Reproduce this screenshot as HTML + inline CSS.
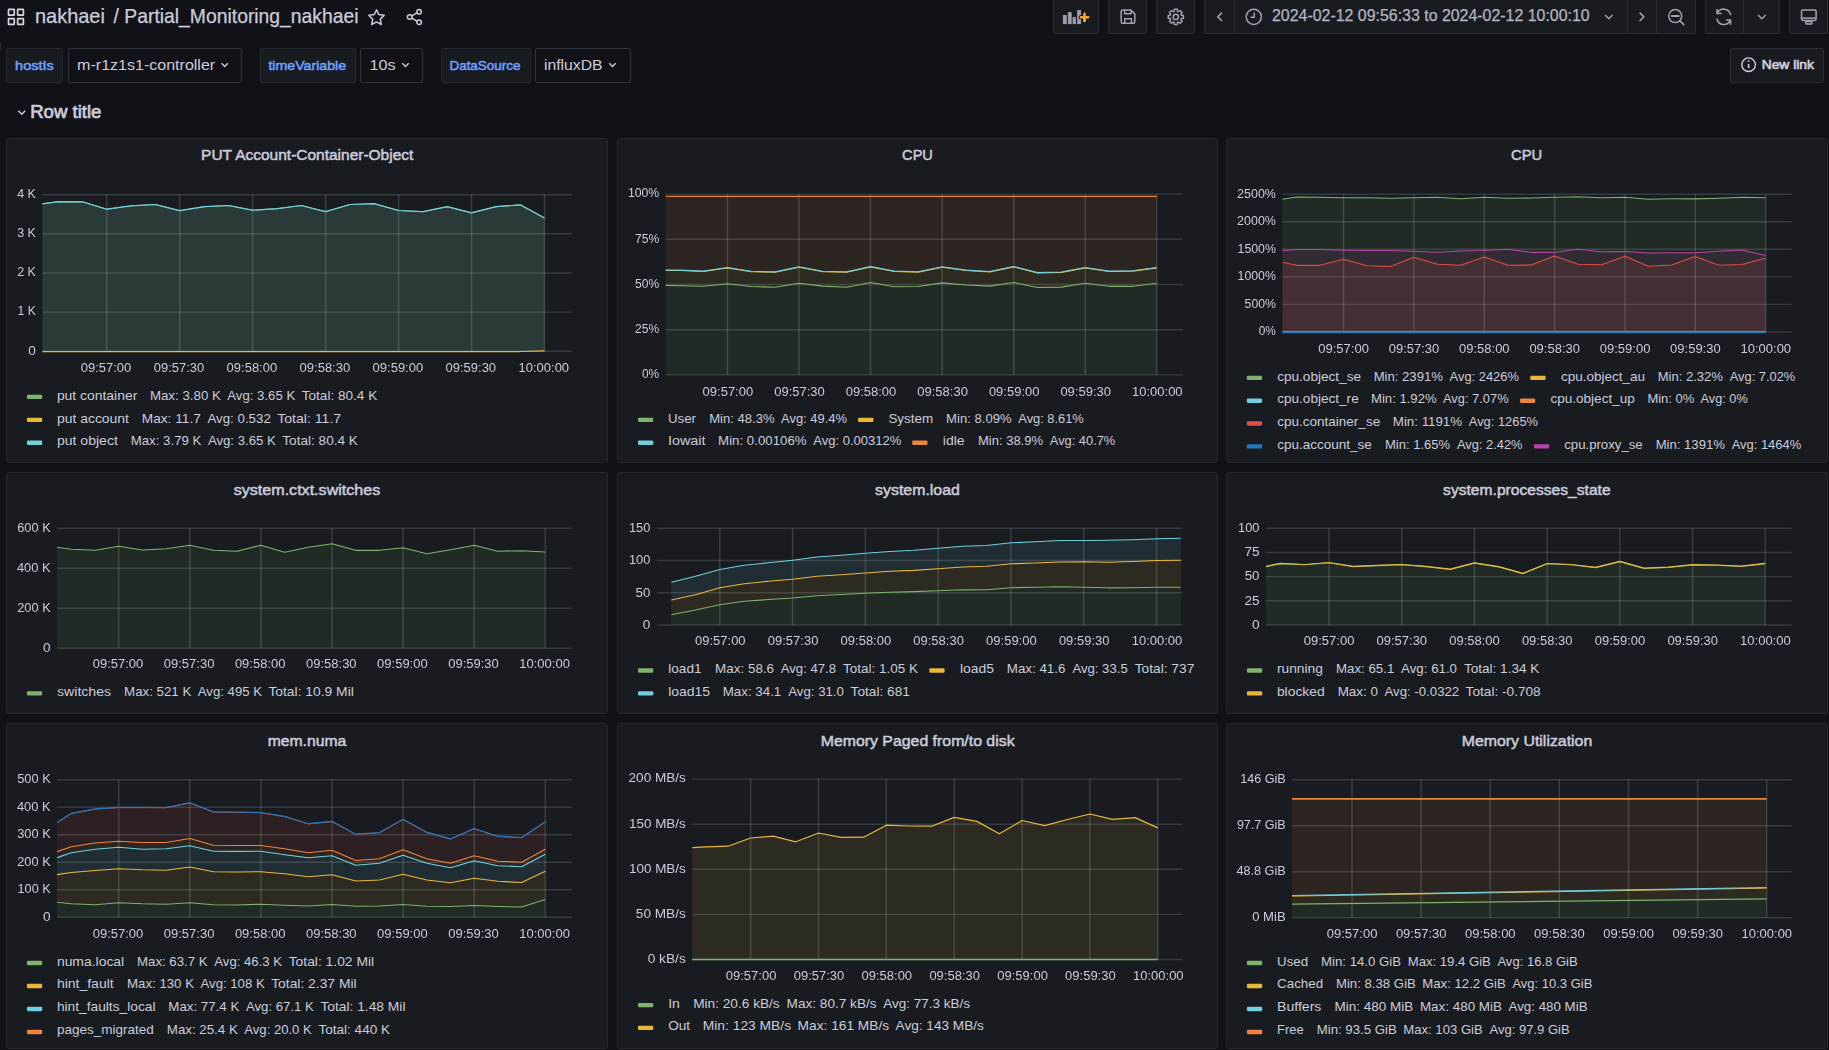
<!DOCTYPE html>
<html lang="en"><head><meta charset="utf-8"><title>Partial_Monitoring_nakhaei - Grafana</title>
<style>
html,body{margin:0;padding:0;background:#111217;}
body{width:1829px;height:1050px;overflow:hidden;position:relative;font-family:"Liberation Sans",sans-serif;color:#ccccdc;}
svg text{font-family:"Liberation Sans",sans-serif;}
.panel{position:absolute;background:#181b1f;border:1px solid #24272c;border-radius:3px;box-sizing:border-box;overflow:hidden;}
.panel svg{position:absolute;left:-1px;top:-1px;}
.btn{position:absolute;box-sizing:border-box;background:#181b1f;border:1px solid #2a2d33;border-radius:2px;}
.lbl{position:absolute;box-sizing:border-box;background:#181b1f;border:1px solid #25282e;border-radius:2px;top:48px;height:35px;}
.val{position:absolute;box-sizing:border-box;background:#111217;border:1px solid #31343b;border-radius:2px;top:48px;height:35px;}
#top{position:absolute;left:0;top:0;}
</style></head><body>
<div id="nav">
<div class="btn" style="left:1053.1px;top:-2.0px;width:45.5px;height:36.0px;"></div>
<div class="btn" style="left:1108.3px;top:-2.0px;width:38.5px;height:36.0px;"></div>
<div class="btn" style="left:1156.4px;top:-2.0px;width:38.5px;height:36.0px;"></div>
<div class="btn" style="left:1204.2px;top:-2.0px;width:492.1px;height:36.0px;"></div>
<div class="btn" style="left:1705.4px;top:-2.0px;width:74.4px;height:36.0px;"></div>
<div class="btn" style="left:1789.4px;top:-2.0px;width:38.2px;height:36.0px;"></div>
<div class="btn" style="left:1730.4px;top:48.4px;width:93.4px;height:34.4px;"></div>
</div>
<div id="vars">
<div class="lbl" style="left:6.2px;width:56.5px"></div>
<div class="lbl" style="left:260px;width:95.5px"></div>
<div class="lbl" style="left:440.5px;width:90.0px"></div>
<div class="val" style="left:68.2px;width:173.39999999999998px"></div>
<div class="val" style="left:360px;width:62.60000000000002px"></div>
<div class="val" style="left:534.5px;width:96.10000000000002px"></div>
</div>
<svg id="top" width="1829" height="136" viewBox="0 0 1829 136">
<rect x="8.5" y="9.35" width="5.75" height="5.85" rx="0.35" fill="none" stroke="#d5d5e2" stroke-width="1.7"/>
<rect x="17.65" y="9.35" width="5.75" height="5.85" rx="0.35" fill="none" stroke="#d5d5e2" stroke-width="1.7"/>
<rect x="8.5" y="18.6" width="5.75" height="5.85" rx="0.35" fill="none" stroke="#d5d5e2" stroke-width="1.7"/>
<rect x="17.65" y="18.6" width="5.75" height="5.85" rx="0.35" fill="none" stroke="#d5d5e2" stroke-width="1.7"/>
<text x="35.0" y="23.4" font-size="20.2" textLength="69.9" lengthAdjust="spacingAndGlyphs" stroke="#ccccdc" stroke-width="0.25" fill="#ccccdc">nakhaei</text>
<text x="113.6" y="23.4" font-size="20.2" textLength="245.0" lengthAdjust="spacingAndGlyphs" stroke="#ccccdc" stroke-width="0.25" fill="#ccccdc">/ Partial_Monitoring_nakhaei</text>
<path transform="translate(376.5,17.3)" d="M0 -7.6L2.3 -2.7L7.7 -2L3.8 1.8L4.8 7.2L0 4.6L-4.8 7.2L-3.8 1.8L-7.7 -2L-2.3 -2.7Z" fill="none" stroke="#ccccdc" stroke-width="1.5" stroke-linejoin="round"/>
<g transform="translate(414.5,17)" fill="none" stroke="#ccccdc" stroke-width="1.5"><circle cx="4.6" cy="-5.2" r="2.3"/><circle cx="-4.8" cy="0" r="2.3"/><circle cx="4.6" cy="5.2" r="2.3"/><path d="M-2.7 -1.1L2.5 -4.1M-2.7 1.1L2.5 4.1"/></g>
<g fill="#9d9eab"><rect x="1062.9" y="15" width="3.9" height="9.1"/><rect x="1067.9" y="12.1" width="3.8" height="12"/><rect x="1072.6" y="17.1" width="3.3" height="7"/><rect x="1077.1" y="10.1" width="3.9" height="14"/></g>
<defs><filter id="nf" x="-5%" y="-5%" width="110%" height="110%" color-interpolation-filters="sRGB"><feOffset dx="0" dy="0"/></filter></defs>
<defs><linearGradient id="pg" gradientUnits="userSpaceOnUse" x1="0" y1="12" x2="0" y2="22"><stop offset="0" stop-color="#f58b1f"/><stop offset="1" stop-color="#fbc12d"/></linearGradient></defs>
<path d="M1084.5 13.6V20.9M1080.9 17.2H1088.2" stroke="#181b1f" stroke-width="4.6" stroke-linecap="round" fill="none"/>
<path d="M1084.5 13.6V20.9M1080.9 17.25H1088.2" stroke="url(#pg)" stroke-width="2.6" stroke-linecap="round" fill="none"/>
<g transform="translate(1128,16.65)" fill="none" stroke="#a3a4b2" stroke-width="1.5" stroke-linejoin="round"><path d="M-6.8 -5.2A1.5 1.5 0 0 1 -5.3 -6.7H2.9L6.8 -2.8V5.2A1.5 1.5 0 0 1 5.3 6.7H-5.3A1.5 1.5 0 0 1 -6.8 5.2Z"/><path d="M-3.3 6.5V2.0H3.5V6.5M-3.3 -6.5V-3H3.1V-6.3"/></g>
<path d="M1174.09 11.36L1174.35 9.34L1177.25 9.34L1177.51 11.36L1178.51 11.77L1180.12 10.52L1182.18 12.58L1180.93 14.19L1181.34 15.19L1183.36 15.45L1183.36 18.35L1181.34 18.61L1180.93 19.61L1182.18 21.22L1180.12 23.28L1178.51 22.03L1177.51 22.44L1177.25 24.46L1174.35 24.46L1174.09 22.44L1173.09 22.03L1171.48 23.28L1169.42 21.22L1170.67 19.61L1170.26 18.61L1168.24 18.35L1168.24 15.45L1170.26 15.19L1170.67 14.19L1169.42 12.58L1171.48 10.52L1173.09 11.77Z" fill="none" stroke="#a3a4b2" stroke-width="1.5" stroke-linejoin="round"/><circle cx="1175.8" cy="16.9" r="2.6" fill="none" stroke="#a3a4b2" stroke-width="1.5"/>
<path d="M1234.4 -2V33.5M1627.6 -2V33.5M1656.5 -2V33.5M1743.5 -2V33.5" stroke="#2a2d33" stroke-width="1"/>
<path d="M1222 12.6L1217.8 16.8L1222 21" fill="none" stroke="#a3a4b2" stroke-width="1.6"/>
<circle cx="1253.8" cy="16.8" r="7.6" fill="none" stroke="#a3a4b2" stroke-width="1.5"/><path d="M1254.2 12.4V17.2H1250.6" fill="none" stroke="#a3a4b2" stroke-width="1.5"/>
<text x="1272.0" y="21.2" font-size="16.2" textLength="317.7" lengthAdjust="spacingAndGlyphs" stroke="#b4b5c5" stroke-width="0.25" fill="#b4b5c5">2024-02-12 09:56:33 to 2024-02-12 10:00:10</text>
<path d="M1605 15L1608.8 18.8L1612.6 15" fill="none" stroke="#a3a4b2" stroke-width="1.5"/>
<path d="M1639.6 12.6L1643.8 16.8L1639.6 21" fill="none" stroke="#a3a4b2" stroke-width="1.6"/>
<circle cx="1675.2" cy="16.1" r="6.5" fill="none" stroke="#a3a4b2" stroke-width="1.5"/><path d="M1680 20.9L1683.8 24.6" fill="none" stroke="#a3a4b2" stroke-width="1.6" stroke-linecap="round"/><path d="M1671.7 16.1H1678.7" fill="none" stroke="#a3a4b2" stroke-width="2" stroke-linecap="round"/>
<g fill="none" stroke="#a3a4b2" stroke-width="1.5" stroke-linecap="round" stroke-linejoin="round"><path d="M1730.6 14.6A7 7 0 0 0 1717.4 13.2M1717.0 9.4V13.6H1721.2"/><path d="M1717.0 19.0A7 7 0 0 0 1730.2 20.4M1730.6 24.2V20H1726.4"/></g>
<path d="M1758 15L1761.8 18.8L1765.6 15" fill="none" stroke="#a3a4b2" stroke-width="1.5"/>
<g fill="none" stroke="#a3a4b2" stroke-width="1.5" stroke-linejoin="round"><rect x="1801.5" y="9.9" width="14.6" height="10.6" rx="1.4"/><path d="M1801.5 18.1H1816.1"/><rect x="1805.9" y="21.4" width="5.8" height="2.7" rx="0.6"/></g>
<circle cx="1748.6" cy="64.7" r="6.8" fill="none" stroke="#ccccdc" stroke-width="1.4"/><path d="M1748.6 63.9V68.1" stroke="#ccccdc" stroke-width="1.6" fill="none"/><circle cx="1748.6" cy="61.1" r="0.95" fill="#ccccdc"/>
<text x="1761.7" y="69.4" font-size="13.2" textLength="52.2" lengthAdjust="spacingAndGlyphs" stroke="#ccccdc" stroke-width="0.7" fill="#ccccdc">New link</text>
<text x="15.1" y="70.0" font-size="13.2" textLength="38.6" lengthAdjust="spacingAndGlyphs" stroke="#6e9fff" stroke-width="0.55" fill="#6e9fff">hostIs</text>
<text x="268.4" y="70.0" font-size="13.2" textLength="77.7" lengthAdjust="spacingAndGlyphs" stroke="#6e9fff" stroke-width="0.55" fill="#6e9fff">timeVariable</text>
<text x="449.4" y="70.0" font-size="13.2" textLength="71.2" lengthAdjust="spacingAndGlyphs" stroke="#6e9fff" stroke-width="0.55" fill="#6e9fff">DataSource</text>
<text x="77.1" y="70.4" font-size="15.4" textLength="138.1" lengthAdjust="spacingAndGlyphs" fill="#ccccdc">m-r1z1s1-controller</text>
<text x="369.4" y="70.4" font-size="15.4" textLength="26.2" lengthAdjust="spacingAndGlyphs" fill="#ccccdc">10s</text>
<text x="543.9" y="70.4" font-size="15.4" textLength="58.7" lengthAdjust="spacingAndGlyphs" fill="#ccccdc">influxDB</text>
<path d="M221.5 63.3L224.7 66.5L227.89999999999998 63.3" fill="none" stroke="#ccccdc" stroke-width="1.4"/>
<path d="M402.3 63.3L405.5 66.5L408.7 63.3" fill="none" stroke="#ccccdc" stroke-width="1.4"/>
<path d="M609.3 63.3L612.5 66.5L615.7 63.3" fill="none" stroke="#ccccdc" stroke-width="1.4"/>
<path d="M18.4 110.8L21.8 114.2L25.2 110.8" fill="none" stroke="#ccccdc" stroke-width="1.4"/>
<text x="30.2" y="117.8" font-size="17.6" textLength="71.2" lengthAdjust="spacingAndGlyphs" stroke="#ccccdc" stroke-width="0.7" fill="#ccccdc">Row title</text>
<rect x="0" y="42" width="1" height="9" fill="#2a2d33"/>
</svg>
<div class="panel" style="left:6px;top:138px;width:602px;height:325px">
<svg width="602" height="325" viewBox="6 138 602 325">
<text x="201.1" y="159.9" font-size="15.4" textLength="212.2" lengthAdjust="spacingAndGlyphs" stroke="#ccccdc" stroke-width="0.5" fill="#ccccdc">PUT Account-Container-Object</text>
<clipPath id="c1"><rect x="42.2" y="191.7" width="529.5" height="161.60000000000002"/></clipPath>
<g clip-path="url(#c1)">
<polygon points="42.2,203.8 58.1,201.7 82.4,201.8 106.7,209.2 131.0,205.8 155.3,204.5 179.7,210.7 204.0,206.7 228.3,205.5 252.6,210.2 277.0,208.7 301.3,205.5 325.6,211.7 349.9,204.5 374.2,203.7 398.6,210.5 422.9,211.7 447.2,206.7 471.5,212.8 495.9,206.7 520.2,204.8 544.5,218.0 544.5,351.3 42.2,351.3" fill="#7EB26D" fill-opacity="0.1"/>
<polygon points="42.2,203.8 58.1,201.7 82.4,201.8 106.7,209.2 131.0,205.8 155.3,204.5 179.7,210.7 204.0,206.7 228.3,205.5 252.6,210.2 277.0,208.7 301.3,205.5 325.6,211.7 349.9,204.5 374.2,203.7 398.6,210.5 422.9,211.7 447.2,206.7 471.5,212.8 495.9,206.7 520.2,204.8 544.5,218.0 544.5,351.3 42.2,351.3" fill="#6ED0E0" fill-opacity="0.1"/>
</g>
<path d="M106.7 194.7V351.3M179.7 194.7V351.3M252.6 194.7V351.3M325.6 194.7V351.3M398.6 194.7V351.3M471.5 194.7V351.3M544.5 194.7V351.3" stroke="rgba(201,206,203,0.205)" stroke-width="1.4" fill="none"/><path d="M42.2 194.7H571.7M42.2 233.8H571.7M42.2 273.0H571.7M42.2 312.1H571.7M42.2 351.3H571.7" stroke="rgba(201,206,203,0.175)" stroke-width="1.4" fill="none"/>
<g clip-path="url(#c1)">
<polyline points="42.2,203.8 58.1,201.7 82.4,201.8 106.7,209.2 131.0,205.8 155.3,204.5 179.7,210.7 204.0,206.7 228.3,205.5 252.6,210.2 277.0,208.7 301.3,205.5 325.6,211.7 349.9,204.5 374.2,203.7 398.6,210.5 422.9,211.7 447.2,206.7 471.5,212.8 495.9,206.7 520.2,204.8 544.5,218.0" fill="none" stroke="#7EB26D" stroke-width="1.15" stroke-linejoin="round"/>
<polyline points="42.2,351.5 520.2,351.5 544.5,350.9" fill="none" stroke="#EAB839" stroke-width="1.25" stroke-linejoin="round"/>
<polyline points="42.2,203.8 58.1,201.7 82.4,201.8 106.7,209.2 131.0,205.8 155.3,204.5 179.7,210.7 204.0,206.7 228.3,205.5 252.6,210.2 277.0,208.7 301.3,205.5 325.6,211.7 349.9,204.5 374.2,203.7 398.6,210.5 422.9,211.7 447.2,206.7 471.5,212.8 495.9,206.7 520.2,204.8 544.5,218.0" fill="none" stroke="#6ED0E0" stroke-width="1.2" stroke-linejoin="round"/>
</g>
<g filter="url(#nf)"><text x="106.0" y="371.9" font-size="13.2" text-anchor="middle" textLength="50.6" lengthAdjust="spacingAndGlyphs" fill="#ccccdc">09:57:00</text><text x="179.0" y="371.9" font-size="13.2" text-anchor="middle" textLength="50.6" lengthAdjust="spacingAndGlyphs" fill="#ccccdc">09:57:30</text><text x="251.9" y="371.9" font-size="13.2" text-anchor="middle" textLength="50.6" lengthAdjust="spacingAndGlyphs" fill="#ccccdc">09:58:00</text><text x="324.9" y="371.9" font-size="13.2" text-anchor="middle" textLength="50.6" lengthAdjust="spacingAndGlyphs" fill="#ccccdc">09:58:30</text><text x="397.9" y="371.9" font-size="13.2" text-anchor="middle" textLength="50.6" lengthAdjust="spacingAndGlyphs" fill="#ccccdc">09:59:00</text><text x="470.8" y="371.9" font-size="13.2" text-anchor="middle" textLength="50.6" lengthAdjust="spacingAndGlyphs" fill="#ccccdc">09:59:30</text><text x="543.8" y="371.9" font-size="13.2" text-anchor="middle" textLength="50.6" lengthAdjust="spacingAndGlyphs" fill="#ccccdc">10:00:00</text><text x="35.9" y="198.0" font-size="13.2" text-anchor="end" textLength="18.7" lengthAdjust="spacingAndGlyphs" fill="#ccccdc">4 K</text><text x="35.9" y="237.2" font-size="13.2" text-anchor="end" textLength="18.7" lengthAdjust="spacingAndGlyphs" fill="#ccccdc">3 K</text><text x="35.9" y="276.3" font-size="13.2" text-anchor="end" textLength="18.7" lengthAdjust="spacingAndGlyphs" fill="#ccccdc">2 K</text><text x="35.9" y="315.4" font-size="13.2" text-anchor="end" textLength="18.3" lengthAdjust="spacingAndGlyphs" fill="#ccccdc">1 K</text><text x="35.9" y="354.6" font-size="13.2" text-anchor="end" textLength="7.6" lengthAdjust="spacingAndGlyphs" fill="#ccccdc">0</text></g>
<rect x="26.9" y="394.70" width="15.3" height="4.4" rx="1.1" fill="#7EB26D"/>
<text x="56.9" y="399.9" font-size="13.2" textLength="80.4" lengthAdjust="spacingAndGlyphs" fill="#ccccdc">put container</text>
<text x="149.9" y="399.9" font-size="13.2" textLength="71.0" lengthAdjust="spacingAndGlyphs" fill="#ccccdc">Max: 3.80 K</text>
<text x="227.3" y="399.9" font-size="13.2" textLength="67.9" lengthAdjust="spacingAndGlyphs" fill="#ccccdc">Avg: 3.65 K</text>
<text x="301.7" y="399.9" font-size="13.2" textLength="75.6" lengthAdjust="spacingAndGlyphs" fill="#ccccdc">Total: 80.4 K</text>
<rect x="26.9" y="417.70" width="15.3" height="4.4" rx="1.1" fill="#EAB839"/>
<text x="56.9" y="422.9" font-size="13.2" textLength="72.1" lengthAdjust="spacingAndGlyphs" fill="#ccccdc">put account</text>
<text x="141.8" y="422.9" font-size="13.2" textLength="59.0" lengthAdjust="spacingAndGlyphs" fill="#ccccdc">Max: 11.7</text>
<text x="207.4" y="422.9" font-size="13.2" textLength="63.4" lengthAdjust="spacingAndGlyphs" fill="#ccccdc">Avg: 0.532</text>
<text x="277.2" y="422.9" font-size="13.2" textLength="64.0" lengthAdjust="spacingAndGlyphs" fill="#ccccdc">Total: 11.7</text>
<rect x="26.9" y="440.60" width="15.3" height="4.4" rx="1.1" fill="#6ED0E0"/>
<text x="56.9" y="445.2" font-size="13.2" textLength="61.0" lengthAdjust="spacingAndGlyphs" fill="#ccccdc">put object</text>
<text x="130.7" y="445.2" font-size="13.2" textLength="70.7" lengthAdjust="spacingAndGlyphs" fill="#ccccdc">Max: 3.79 K</text>
<text x="207.9" y="445.2" font-size="13.2" textLength="67.9" lengthAdjust="spacingAndGlyphs" fill="#ccccdc">Avg: 3.65 K</text>
<text x="282.3" y="445.2" font-size="13.2" textLength="75.6" lengthAdjust="spacingAndGlyphs" fill="#ccccdc">Total: 80.4 K</text>
</svg></div>
<div class="panel" style="left:617px;top:138px;width:601px;height:325px">
<svg width="601" height="325" viewBox="617 138 601 325">
<text x="902.1" y="159.9" font-size="15.4" textLength="30.8" lengthAdjust="spacingAndGlyphs" stroke="#ccccdc" stroke-width="0.5" fill="#ccccdc">CPU</text>
<clipPath id="c2"><rect x="665.5" y="191.1" width="517.4000000000001" height="185.79999999999998"/></clipPath>
<g clip-path="url(#c2)">
<polygon points="665.5,285.4 679.7,285.8 703.5,286.3 727.4,283.7 751.3,286.5 775.1,287.3 799.0,283.3 822.8,286.1 846.7,287.3 870.5,282.5 894.4,286.7 918.2,286.5 942.1,282.9 966.0,285.0 989.8,286.1 1013.7,282.5 1037.5,287.5 1061.4,287.1 1085.2,283.3 1109.1,286.3 1132.9,286.3 1156.8,283.3 1156.8,374.9 665.5,374.9" fill="#7EB26D" fill-opacity="0.1"/>
<polygon points="665.5,270.1 679.7,270.1 703.5,271.1 727.4,267.5 751.3,271.3 775.1,271.9 799.0,266.9 822.8,271.3 846.7,271.9 870.5,266.5 894.4,271.1 918.2,271.7 942.1,266.9 966.0,270.1 989.8,271.5 1013.7,266.5 1037.5,272.6 1061.4,272.0 1085.2,267.5 1109.1,271.1 1132.9,270.7 1156.8,267.5 1156.8,283.3 1132.9,286.3 1109.1,286.3 1085.2,283.3 1061.4,287.1 1037.5,287.5 1013.7,282.5 989.8,286.1 966.0,285.0 942.1,282.9 918.2,286.5 894.4,286.7 870.5,282.5 846.7,287.3 822.8,286.1 799.0,283.3 775.1,287.3 751.3,286.5 727.4,283.7 703.5,286.3 679.7,285.8 665.5,285.4" fill="#EAB839" fill-opacity="0.1"/>
<polygon points="665.5,196.4 679.7,196.4 703.5,196.4 727.4,196.4 751.3,196.4 775.1,196.4 799.0,196.4 822.8,196.4 846.7,196.4 870.5,196.4 894.4,196.4 918.2,196.4 942.1,196.4 966.0,196.4 989.8,196.4 1013.7,196.4 1037.5,196.4 1061.4,196.4 1085.2,196.4 1109.1,196.4 1132.9,196.4 1156.8,196.4 1156.8,267.5 1132.9,270.7 1109.1,271.1 1085.2,267.5 1061.4,272.0 1037.5,272.6 1013.7,266.5 989.8,271.5 966.0,270.1 942.1,266.9 918.2,271.7 894.4,271.1 870.5,266.5 846.7,271.9 822.8,271.3 799.0,266.9 775.1,271.9 751.3,271.3 727.4,267.5 703.5,271.1 679.7,270.1 665.5,270.1" fill="#EF843C" fill-opacity="0.1"/>
</g>
<path d="M727.4 194.1V374.9M799.0 194.1V374.9M870.5 194.1V374.9M942.1 194.1V374.9M1013.7 194.1V374.9M1085.2 194.1V374.9M1156.8 194.1V374.9" stroke="rgba(201,206,203,0.205)" stroke-width="1.4" fill="none"/><path d="M665.5 194.1H1182.9M665.5 239.3H1182.9M665.5 284.5H1182.9M665.5 329.7H1182.9M665.5 374.9H1182.9" stroke="rgba(201,206,203,0.175)" stroke-width="1.4" fill="none"/>
<g clip-path="url(#c2)">
<polyline points="665.5,285.4 679.7,285.8 703.5,286.3 727.4,283.7 751.3,286.5 775.1,287.3 799.0,283.3 822.8,286.1 846.7,287.3 870.5,282.5 894.4,286.7 918.2,286.5 942.1,282.9 966.0,285.0 989.8,286.1 1013.7,282.5 1037.5,287.5 1061.4,287.1 1085.2,283.3 1109.1,286.3 1132.9,286.3 1156.8,283.3" fill="none" stroke="#7EB26D" stroke-width="1.15" stroke-linejoin="round"/>
<polyline points="665.5,270.5 679.7,270.5 703.5,271.5 727.4,267.9 751.3,271.7 775.1,272.3 799.0,267.3 822.8,271.7 846.7,272.3 870.5,266.9 894.4,271.5 918.2,272.1 942.1,267.3 966.0,270.5 989.8,271.9 1013.7,266.9 1037.5,273.0 1061.4,272.4 1085.2,267.9 1109.1,271.5 1132.9,271.1 1156.8,267.9" fill="none" stroke="#EAB839" stroke-width="1.15" stroke-linejoin="round"/>
<polyline points="665.5,270.1 679.7,270.1 703.5,271.1 727.4,267.5 751.3,271.3 775.1,271.9 799.0,266.9 822.8,271.3 846.7,271.9 870.5,266.5 894.4,271.1 918.2,271.7 942.1,266.9 966.0,270.1 989.8,271.5 1013.7,266.5 1037.5,272.6 1061.4,272.0 1085.2,267.5 1109.1,271.1 1132.9,270.7 1156.8,267.5" fill="none" stroke="#6ED0E0" stroke-width="1.15" stroke-linejoin="round"/>
<polyline points="665.5,196.4 679.7,196.4 703.5,196.4 727.4,196.4 751.3,196.4 775.1,196.4 799.0,196.4 822.8,196.4 846.7,196.4 870.5,196.4 894.4,196.4 918.2,196.4 942.1,196.4 966.0,196.4 989.8,196.4 1013.7,196.4 1037.5,196.4 1061.4,196.4 1085.2,196.4 1109.1,196.4 1132.9,196.4 1156.8,196.4" fill="none" stroke="#EF843C" stroke-width="1.3" stroke-linejoin="round"/>
</g>
<g filter="url(#nf)"><text x="727.9" y="395.5" font-size="13.2" text-anchor="middle" textLength="50.6" lengthAdjust="spacingAndGlyphs" fill="#ccccdc">09:57:00</text><text x="799.5" y="395.5" font-size="13.2" text-anchor="middle" textLength="50.6" lengthAdjust="spacingAndGlyphs" fill="#ccccdc">09:57:30</text><text x="871.0" y="395.5" font-size="13.2" text-anchor="middle" textLength="50.6" lengthAdjust="spacingAndGlyphs" fill="#ccccdc">09:58:00</text><text x="942.6" y="395.5" font-size="13.2" text-anchor="middle" textLength="50.6" lengthAdjust="spacingAndGlyphs" fill="#ccccdc">09:58:30</text><text x="1014.2" y="395.5" font-size="13.2" text-anchor="middle" textLength="50.6" lengthAdjust="spacingAndGlyphs" fill="#ccccdc">09:59:00</text><text x="1085.7" y="395.5" font-size="13.2" text-anchor="middle" textLength="50.6" lengthAdjust="spacingAndGlyphs" fill="#ccccdc">09:59:30</text><text x="1157.3" y="395.5" font-size="13.2" text-anchor="middle" textLength="50.6" lengthAdjust="spacingAndGlyphs" fill="#ccccdc">10:00:00</text><text x="659.2" y="197.4" font-size="13.2" text-anchor="end" textLength="31.3" lengthAdjust="spacingAndGlyphs" fill="#ccccdc">100%</text><text x="659.2" y="242.6" font-size="13.2" text-anchor="end" textLength="24.2" lengthAdjust="spacingAndGlyphs" fill="#ccccdc">75%</text><text x="659.2" y="287.8" font-size="13.2" text-anchor="end" textLength="24.2" lengthAdjust="spacingAndGlyphs" fill="#ccccdc">50%</text><text x="659.2" y="333.0" font-size="13.2" text-anchor="end" textLength="24.2" lengthAdjust="spacingAndGlyphs" fill="#ccccdc">25%</text><text x="659.2" y="378.2" font-size="13.2" text-anchor="end" textLength="17.2" lengthAdjust="spacingAndGlyphs" fill="#ccccdc">0%</text></g>
<rect x="638.0" y="417.70" width="15.3" height="4.4" rx="1.1" fill="#7EB26D"/>
<text x="667.9" y="422.9" font-size="13.2" textLength="28.1" lengthAdjust="spacingAndGlyphs" fill="#ccccdc">User</text>
<text x="709.2" y="422.9" font-size="13.2" textLength="65.5" lengthAdjust="spacingAndGlyphs" fill="#ccccdc">Min: 48.3%</text>
<text x="781.1" y="422.9" font-size="13.2" textLength="65.8" lengthAdjust="spacingAndGlyphs" fill="#ccccdc">Avg: 49.4%</text>
<rect x="858.1" y="417.70" width="15.3" height="4.4" rx="1.1" fill="#EAB839"/>
<text x="888.4" y="422.9" font-size="13.2" textLength="44.8" lengthAdjust="spacingAndGlyphs" fill="#ccccdc">System</text>
<text x="946.1" y="422.9" font-size="13.2" textLength="65.5" lengthAdjust="spacingAndGlyphs" fill="#ccccdc">Min: 8.09%</text>
<text x="1018.3" y="422.9" font-size="13.2" textLength="65.5" lengthAdjust="spacingAndGlyphs" fill="#ccccdc">Avg: 8.61%</text>
<rect x="638.0" y="440.60" width="15.3" height="4.4" rx="1.1" fill="#6ED0E0"/>
<text x="667.9" y="445.2" font-size="13.2" textLength="37.6" lengthAdjust="spacingAndGlyphs" fill="#ccccdc">Iowait</text>
<text x="718.1" y="445.2" font-size="13.2" textLength="88.5" lengthAdjust="spacingAndGlyphs" fill="#ccccdc">Min: 0.00106%</text>
<text x="813.2" y="445.2" font-size="13.2" textLength="88.2" lengthAdjust="spacingAndGlyphs" fill="#ccccdc">Avg: 0.00312%</text>
<rect x="912.2" y="440.60" width="15.3" height="4.4" rx="1.1" fill="#EF843C"/>
<text x="942.8" y="445.2" font-size="13.2" textLength="21.9" lengthAdjust="spacingAndGlyphs" fill="#ccccdc">idle</text>
<text x="977.9" y="445.2" font-size="13.2" textLength="65.2" lengthAdjust="spacingAndGlyphs" fill="#ccccdc">Min: 38.9%</text>
<text x="1049.8" y="445.2" font-size="13.2" textLength="65.5" lengthAdjust="spacingAndGlyphs" fill="#ccccdc">Avg: 40.7%</text>
</svg></div>
<div class="panel" style="left:1226px;top:138px;width:602px;height:325px">
<svg width="602" height="325" viewBox="1226 138 602 325">
<text x="1511.1" y="159.9" font-size="15.4" textLength="31.2" lengthAdjust="spacingAndGlyphs" stroke="#ccccdc" stroke-width="0.5" fill="#ccccdc">CPU</text>
<clipPath id="c3"><rect x="1282.2" y="191.2" width="509.5" height="142.8"/></clipPath>
<g clip-path="url(#c3)">
<polygon points="1282.2,199.2 1296.6,197.0 1320.0,197.2 1343.5,197.7 1367.0,197.7 1390.4,198.3 1413.9,197.7 1437.3,197.3 1460.8,198.8 1484.2,197.2 1507.7,198.2 1531.1,198.0 1554.6,197.3 1578.1,196.8 1601.5,197.7 1625.0,197.2 1648.4,199.3 1671.9,198.8 1695.3,198.8 1718.8,198.3 1742.2,197.3 1765.7,197.8 1765.7,332.0 1282.2,332.0" fill="#7EB26D" fill-opacity="0.1"/>
<polygon points="1282.2,250.8 1296.6,249.5 1320.0,249.5 1343.5,250.3 1367.0,250.5 1390.4,250.5 1413.9,251.2 1437.3,252.3 1460.8,251.0 1484.2,250.5 1507.7,249.3 1531.1,252.3 1554.6,252.3 1578.1,249.3 1601.5,251.7 1625.0,251.5 1648.4,253.0 1671.9,252.7 1695.3,252.7 1718.8,251.3 1742.2,250.0 1765.7,255.5 1765.7,332.0 1282.2,332.0" fill="#BA43A9" fill-opacity="0.1"/>
<polygon points="1282.2,262.3 1296.6,265.3 1320.0,265.3 1343.5,259.3 1367.0,265.7 1390.4,266.5 1413.9,257.2 1437.3,264.3 1460.8,265.3 1484.2,257.0 1507.7,265.3 1531.1,265.0 1554.6,256.0 1578.1,264.2 1601.5,264.8 1625.0,256.2 1648.4,266.3 1671.9,265.0 1695.3,256.5 1718.8,265.2 1742.2,264.5 1765.7,258.0 1765.7,332.0 1282.2,332.0" fill="#E24D42" fill-opacity="0.1"/>
</g>
<path d="M1343.5 194.2V332.0M1413.9 194.2V332.0M1484.2 194.2V332.0M1554.6 194.2V332.0M1625.0 194.2V332.0M1695.3 194.2V332.0M1765.7 194.2V332.0" stroke="rgba(201,206,203,0.205)" stroke-width="1.4" fill="none"/><path d="M1282.2 194.2H1791.7M1282.2 221.8H1791.7M1282.2 249.3H1791.7M1282.2 276.9H1791.7M1282.2 304.4H1791.7M1282.2 332.0H1791.7" stroke="rgba(201,206,203,0.175)" stroke-width="1.4" fill="none"/>
<g clip-path="url(#c3)">
<polyline points="1282.2,199.2 1296.6,197.0 1320.0,197.2 1343.5,197.7 1367.0,197.7 1390.4,198.3 1413.9,197.7 1437.3,197.3 1460.8,198.8 1484.2,197.2 1507.7,198.2 1531.1,198.0 1554.6,197.3 1578.1,196.8 1601.5,197.7 1625.0,197.2 1648.4,199.3 1671.9,198.8 1695.3,198.8 1718.8,198.3 1742.2,197.3 1765.7,197.8" fill="none" stroke="#7EB26D" stroke-width="1.15" stroke-linejoin="round"/>
<polyline points="1282.2,331.4 1296.6,331.4 1320.0,331.4 1343.5,331.4 1367.0,331.4 1390.4,331.4 1413.9,331.4 1437.3,331.4 1460.8,331.4 1484.2,331.4 1507.7,331.4 1531.1,331.4 1554.6,331.4 1578.1,331.4 1601.5,331.4 1625.0,331.4 1648.4,331.4 1671.9,331.4 1695.3,331.4 1718.8,331.4 1742.2,331.4 1765.7,331.4" fill="none" stroke="#EF843C" stroke-width="1.0" stroke-linejoin="round"/>
<polyline points="1282.2,262.3 1296.6,265.3 1320.0,265.3 1343.5,259.3 1367.0,265.7 1390.4,266.5 1413.9,257.2 1437.3,264.3 1460.8,265.3 1484.2,257.0 1507.7,265.3 1531.1,265.0 1554.6,256.0 1578.1,264.2 1601.5,264.8 1625.0,256.2 1648.4,266.3 1671.9,265.0 1695.3,256.5 1718.8,265.2 1742.2,264.5 1765.7,258.0" fill="none" stroke="#E24D42" stroke-width="1.15" stroke-linejoin="round"/>
<polyline points="1282.2,332.4 1296.6,332.4 1320.0,332.4 1343.5,332.4 1367.0,332.4 1390.4,332.4 1413.9,332.4 1437.3,332.4 1460.8,332.4 1484.2,332.4 1507.7,332.4 1531.1,332.4 1554.6,332.4 1578.1,332.4 1601.5,332.4 1625.0,332.4 1648.4,332.4 1671.9,332.4 1695.3,332.4 1718.8,332.4 1742.2,332.4 1765.7,332.4" fill="none" stroke="#1F78C1" stroke-width="1.6" stroke-linejoin="round"/>
<polyline points="1282.2,250.8 1296.6,249.5 1320.0,249.5 1343.5,250.3 1367.0,250.5 1390.4,250.5 1413.9,251.2 1437.3,252.3 1460.8,251.0 1484.2,250.5 1507.7,249.3 1531.1,252.3 1554.6,252.3 1578.1,249.3 1601.5,251.7 1625.0,251.5 1648.4,253.0 1671.9,252.7 1695.3,252.7 1718.8,251.3 1742.2,250.0 1765.7,255.5" fill="none" stroke="#BA43A9" stroke-width="1.15" stroke-linejoin="round"/>
</g>
<g filter="url(#nf)"><text x="1343.6" y="352.6" font-size="13.2" text-anchor="middle" textLength="50.6" lengthAdjust="spacingAndGlyphs" fill="#ccccdc">09:57:00</text><text x="1414.0" y="352.6" font-size="13.2" text-anchor="middle" textLength="50.6" lengthAdjust="spacingAndGlyphs" fill="#ccccdc">09:57:30</text><text x="1484.3" y="352.6" font-size="13.2" text-anchor="middle" textLength="50.6" lengthAdjust="spacingAndGlyphs" fill="#ccccdc">09:58:00</text><text x="1554.7" y="352.6" font-size="13.2" text-anchor="middle" textLength="50.6" lengthAdjust="spacingAndGlyphs" fill="#ccccdc">09:58:30</text><text x="1625.1" y="352.6" font-size="13.2" text-anchor="middle" textLength="50.6" lengthAdjust="spacingAndGlyphs" fill="#ccccdc">09:59:00</text><text x="1695.4" y="352.6" font-size="13.2" text-anchor="middle" textLength="50.6" lengthAdjust="spacingAndGlyphs" fill="#ccccdc">09:59:30</text><text x="1765.8" y="352.6" font-size="13.2" text-anchor="middle" textLength="50.6" lengthAdjust="spacingAndGlyphs" fill="#ccccdc">10:00:00</text><text x="1275.9" y="197.5" font-size="13.2" text-anchor="end" textLength="38.8" lengthAdjust="spacingAndGlyphs" fill="#ccccdc">2500%</text><text x="1275.9" y="225.1" font-size="13.2" text-anchor="end" textLength="38.8" lengthAdjust="spacingAndGlyphs" fill="#ccccdc">2000%</text><text x="1275.9" y="252.6" font-size="13.2" text-anchor="end" textLength="38.3" lengthAdjust="spacingAndGlyphs" fill="#ccccdc">1500%</text><text x="1275.9" y="280.2" font-size="13.2" text-anchor="end" textLength="38.3" lengthAdjust="spacingAndGlyphs" fill="#ccccdc">1000%</text><text x="1275.9" y="307.7" font-size="13.2" text-anchor="end" textLength="31.3" lengthAdjust="spacingAndGlyphs" fill="#ccccdc">500%</text><text x="1275.9" y="335.3" font-size="13.2" text-anchor="end" textLength="17.2" lengthAdjust="spacingAndGlyphs" fill="#ccccdc">0%</text></g>
<rect x="1246.8" y="375.70" width="15.3" height="4.4" rx="1.1" fill="#7EB26D"/>
<text x="1277.2" y="380.9" font-size="13.2" textLength="83.8" lengthAdjust="spacingAndGlyphs" fill="#ccccdc">cpu.object_se</text>
<text x="1373.7" y="380.9" font-size="13.2" textLength="69.2" lengthAdjust="spacingAndGlyphs" fill="#ccccdc">Min: 2391%</text>
<text x="1449.6" y="380.9" font-size="13.2" textLength="69.3" lengthAdjust="spacingAndGlyphs" fill="#ccccdc">Avg: 2426%</text>
<rect x="1530.3" y="375.70" width="15.3" height="4.4" rx="1.1" fill="#EAB839"/>
<text x="1560.9" y="380.9" font-size="13.2" textLength="84.1" lengthAdjust="spacingAndGlyphs" fill="#ccccdc">cpu.object_au</text>
<text x="1657.7" y="380.9" font-size="13.2" textLength="65.3" lengthAdjust="spacingAndGlyphs" fill="#ccccdc">Min: 2.32%</text>
<text x="1729.7" y="380.9" font-size="13.2" textLength="65.6" lengthAdjust="spacingAndGlyphs" fill="#ccccdc">Avg: 7.02%</text>
<rect x="1246.8" y="398.50" width="15.3" height="4.4" rx="1.1" fill="#6ED0E0"/>
<text x="1277.2" y="402.9" font-size="13.2" textLength="81.5" lengthAdjust="spacingAndGlyphs" fill="#ccccdc">cpu.object_re</text>
<text x="1371.0" y="402.9" font-size="13.2" textLength="65.6" lengthAdjust="spacingAndGlyphs" fill="#ccccdc">Min: 1.92%</text>
<text x="1443.0" y="402.9" font-size="13.2" textLength="65.6" lengthAdjust="spacingAndGlyphs" fill="#ccccdc">Avg: 7.07%</text>
<rect x="1519.9" y="398.50" width="15.3" height="4.4" rx="1.1" fill="#EF843C"/>
<text x="1550.4" y="402.9" font-size="13.2" textLength="84.4" lengthAdjust="spacingAndGlyphs" fill="#ccccdc">cpu.object_up</text>
<text x="1647.4" y="402.9" font-size="13.2" textLength="46.8" lengthAdjust="spacingAndGlyphs" fill="#ccccdc">Min: 0%</text>
<text x="1700.6" y="402.9" font-size="13.2" textLength="47.1" lengthAdjust="spacingAndGlyphs" fill="#ccccdc">Avg: 0%</text>
<rect x="1246.8" y="421.30" width="15.3" height="4.4" rx="1.1" fill="#E24D42"/>
<text x="1277.2" y="425.9" font-size="13.2" textLength="103.0" lengthAdjust="spacingAndGlyphs" fill="#ccccdc">cpu.container_se</text>
<text x="1392.8" y="425.9" font-size="13.2" textLength="69.3" lengthAdjust="spacingAndGlyphs" fill="#ccccdc">Min: 1191%</text>
<text x="1468.8" y="425.9" font-size="13.2" textLength="69.2" lengthAdjust="spacingAndGlyphs" fill="#ccccdc">Avg: 1265%</text>
<rect x="1246.8" y="444.20" width="15.3" height="4.4" rx="1.1" fill="#1F78C1"/>
<text x="1277.2" y="448.9" font-size="13.2" textLength="94.7" lengthAdjust="spacingAndGlyphs" fill="#ccccdc">cpu.account_se</text>
<text x="1384.9" y="448.9" font-size="13.2" textLength="65.3" lengthAdjust="spacingAndGlyphs" fill="#ccccdc">Min: 1.65%</text>
<text x="1456.9" y="448.9" font-size="13.2" textLength="65.6" lengthAdjust="spacingAndGlyphs" fill="#ccccdc">Avg: 2.42%</text>
<rect x="1533.9" y="444.20" width="15.3" height="4.4" rx="1.1" fill="#BA43A9"/>
<text x="1564.2" y="448.9" font-size="13.2" textLength="78.5" lengthAdjust="spacingAndGlyphs" fill="#ccccdc">cpu.proxy_se</text>
<text x="1655.7" y="448.9" font-size="13.2" textLength="69.2" lengthAdjust="spacingAndGlyphs" fill="#ccccdc">Min: 1391%</text>
<text x="1731.7" y="448.9" font-size="13.2" textLength="69.5" lengthAdjust="spacingAndGlyphs" fill="#ccccdc">Avg: 1464%</text>
</svg></div>
<div class="panel" style="left:6px;top:472px;width:602px;height:242px">
<svg width="602" height="242" viewBox="6 472 602 242">
<text x="233.7" y="494.9" font-size="15.4" textLength="146.6" lengthAdjust="spacingAndGlyphs" stroke="#ccccdc" stroke-width="0.5" fill="#ccccdc">system.ctxt.switches</text>
<clipPath id="c4"><rect x="57" y="525.3" width="514.7" height="124.90000000000009"/></clipPath>
<g clip-path="url(#c4)">
<polygon points="57.0,547.2 71.3,549.2 95.0,550.2 118.7,546.2 142.4,550.0 166.1,548.8 189.8,545.3 213.5,550.3 237.2,551.2 260.9,545.2 284.6,552.2 308.3,547.2 332.0,543.7 355.7,550.3 379.4,550.3 403.1,547.8 426.8,553.8 450.5,549.7 474.2,545.3 497.9,551.2 521.6,550.7 545.3,552.0 545.3,648.2 57.0,648.2" fill="#7EB26D" fill-opacity="0.1"/>
</g>
<path d="M118.7 528.3V648.2M189.8 528.3V648.2M260.9 528.3V648.2M332.0 528.3V648.2M403.1 528.3V648.2M474.2 528.3V648.2M545.3 528.3V648.2" stroke="rgba(201,206,203,0.205)" stroke-width="1.4" fill="none"/><path d="M57.0 528.3H571.7M57.0 568.3H571.7M57.0 608.2H571.7M57.0 648.2H571.7" stroke="rgba(201,206,203,0.175)" stroke-width="1.4" fill="none"/>
<g clip-path="url(#c4)">
<polyline points="57.0,547.2 71.3,549.2 95.0,550.2 118.7,546.2 142.4,550.0 166.1,548.8 189.8,545.3 213.5,550.3 237.2,551.2 260.9,545.2 284.6,552.2 308.3,547.2 332.0,543.7 355.7,550.3 379.4,550.3 403.1,547.8 426.8,553.8 450.5,549.7 474.2,545.3 497.9,551.2 521.6,550.7 545.3,552.0" fill="none" stroke="#7EB26D" stroke-width="1.15" stroke-linejoin="round"/>
</g>
<g filter="url(#nf)"><text x="118.0" y="667.8" font-size="13.2" text-anchor="middle" textLength="50.6" lengthAdjust="spacingAndGlyphs" fill="#ccccdc">09:57:00</text><text x="189.1" y="667.8" font-size="13.2" text-anchor="middle" textLength="50.6" lengthAdjust="spacingAndGlyphs" fill="#ccccdc">09:57:30</text><text x="260.2" y="667.8" font-size="13.2" text-anchor="middle" textLength="50.6" lengthAdjust="spacingAndGlyphs" fill="#ccccdc">09:58:00</text><text x="331.3" y="667.8" font-size="13.2" text-anchor="middle" textLength="50.6" lengthAdjust="spacingAndGlyphs" fill="#ccccdc">09:58:30</text><text x="402.4" y="667.8" font-size="13.2" text-anchor="middle" textLength="50.6" lengthAdjust="spacingAndGlyphs" fill="#ccccdc">09:59:00</text><text x="473.5" y="667.8" font-size="13.2" text-anchor="middle" textLength="50.6" lengthAdjust="spacingAndGlyphs" fill="#ccccdc">09:59:30</text><text x="544.6" y="667.8" font-size="13.2" text-anchor="middle" textLength="50.6" lengthAdjust="spacingAndGlyphs" fill="#ccccdc">10:00:00</text><text x="50.7" y="532.1" font-size="13.2" text-anchor="end" textLength="33.5" lengthAdjust="spacingAndGlyphs" fill="#ccccdc">600 K</text><text x="50.7" y="572.1" font-size="13.2" text-anchor="end" textLength="33.8" lengthAdjust="spacingAndGlyphs" fill="#ccccdc">400 K</text><text x="50.7" y="612.0" font-size="13.2" text-anchor="end" textLength="33.5" lengthAdjust="spacingAndGlyphs" fill="#ccccdc">200 K</text><text x="50.7" y="652.0" font-size="13.2" text-anchor="end" textLength="7.6" lengthAdjust="spacingAndGlyphs" fill="#ccccdc">0</text></g>
<rect x="26.9" y="691.20" width="15.3" height="4.4" rx="1.1" fill="#7EB26D"/>
<text x="57.1" y="695.9" font-size="13.2" textLength="53.9" lengthAdjust="spacingAndGlyphs" fill="#ccccdc">switches</text>
<text x="124.1" y="695.9" font-size="13.2" textLength="67.2" lengthAdjust="spacingAndGlyphs" fill="#ccccdc">Max: 521 K</text>
<text x="197.8" y="695.9" font-size="13.2" textLength="64.2" lengthAdjust="spacingAndGlyphs" fill="#ccccdc">Avg: 495 K</text>
<text x="268.4" y="695.9" font-size="13.2" textLength="85.4" lengthAdjust="spacingAndGlyphs" fill="#ccccdc">Total: 10.9 Mil</text>
</svg></div>
<div class="panel" style="left:617px;top:472px;width:601px;height:242px">
<svg width="601" height="242" viewBox="617 472 601 242">
<text x="875.1" y="494.9" font-size="15.4" textLength="84.8" lengthAdjust="spacingAndGlyphs" stroke="#ccccdc" stroke-width="0.5" fill="#ccccdc">system.load</text>
<clipPath id="c5"><rect x="656.7" y="525.3" width="525.8" height="101.70000000000005"/></clipPath>
<g clip-path="url(#c5)">
<polygon points="671.3,614.7 695.5,610.0 719.8,604.7 744.1,601.3 768.3,599.5 792.6,598.0 816.8,595.7 841.1,594.5 865.4,593.3 889.6,592.3 913.9,591.6 938.1,590.8 962.4,589.8 986.7,589.7 1010.9,587.8 1035.2,587.3 1059.5,586.7 1083.7,587.3 1108.0,587.8 1132.2,587.7 1156.5,587.3 1180.8,587.2 1180.8,625.0 671.3,625.0" fill="#7EB26D" fill-opacity="0.1"/>
<polygon points="671.3,600.0 695.5,594.7 719.8,587.8 744.1,583.7 768.3,581.3 792.6,579.3 816.8,576.3 841.1,574.7 865.4,573.0 889.6,571.3 913.9,570.4 938.1,568.7 962.4,567.0 986.7,566.3 1010.9,563.8 1035.2,563.0 1059.5,562.0 1083.7,561.8 1108.0,562.2 1132.2,561.5 1156.5,560.5 1180.8,560.2 1180.8,587.2 1156.5,587.3 1132.2,587.7 1108.0,587.8 1083.7,587.3 1059.5,586.7 1035.2,587.3 1010.9,587.8 986.7,589.7 962.4,589.8 938.1,590.8 913.9,591.6 889.6,592.3 865.4,593.3 841.1,594.5 816.8,595.7 792.6,598.0 768.3,599.5 744.1,601.3 719.8,604.7 695.5,610.0 671.3,614.7" fill="#EAB839" fill-opacity="0.1"/>
<polygon points="671.3,582.3 695.5,576.3 719.8,569.5 744.1,565.3 768.3,562.8 792.6,560.3 816.8,557.0 841.1,555.2 865.4,553.3 889.6,551.5 913.9,550.3 938.1,548.3 962.4,546.3 986.7,545.5 1010.9,542.8 1035.2,541.7 1059.5,540.5 1083.7,540.5 1108.0,540.3 1132.2,539.7 1156.5,538.7 1180.8,538.2 1180.8,560.2 1156.5,560.5 1132.2,561.5 1108.0,562.2 1083.7,561.8 1059.5,562.0 1035.2,563.0 1010.9,563.8 986.7,566.3 962.4,567.0 938.1,568.7 913.9,570.4 889.6,571.3 865.4,573.0 841.1,574.7 816.8,576.3 792.6,579.3 768.3,581.3 744.1,583.7 719.8,587.8 695.5,594.7 671.3,600.0" fill="#6ED0E0" fill-opacity="0.1"/>
</g>
<path d="M719.8 528.3V625.0M792.6 528.3V625.0M865.4 528.3V625.0M938.1 528.3V625.0M1010.9 528.3V625.0M1083.7 528.3V625.0M1156.5 528.3V625.0" stroke="rgba(201,206,203,0.205)" stroke-width="1.4" fill="none"/><path d="M656.7 528.3H1182.5M656.7 560.5H1182.5M656.7 592.8H1182.5M656.7 625.0H1182.5" stroke="rgba(201,206,203,0.175)" stroke-width="1.4" fill="none"/>
<g clip-path="url(#c5)">
<polyline points="671.3,614.7 695.5,610.0 719.8,604.7 744.1,601.3 768.3,599.5 792.6,598.0 816.8,595.7 841.1,594.5 865.4,593.3 889.6,592.3 913.9,591.6 938.1,590.8 962.4,589.8 986.7,589.7 1010.9,587.8 1035.2,587.3 1059.5,586.7 1083.7,587.3 1108.0,587.8 1132.2,587.7 1156.5,587.3 1180.8,587.2" fill="none" stroke="#7EB26D" stroke-width="1.15" stroke-linejoin="round"/>
<polyline points="671.3,600.0 695.5,594.7 719.8,587.8 744.1,583.7 768.3,581.3 792.6,579.3 816.8,576.3 841.1,574.7 865.4,573.0 889.6,571.3 913.9,570.4 938.1,568.7 962.4,567.0 986.7,566.3 1010.9,563.8 1035.2,563.0 1059.5,562.0 1083.7,561.8 1108.0,562.2 1132.2,561.5 1156.5,560.5 1180.8,560.2" fill="none" stroke="#EAB839" stroke-width="1.15" stroke-linejoin="round"/>
<polyline points="671.3,582.3 695.5,576.3 719.8,569.5 744.1,565.3 768.3,562.8 792.6,560.3 816.8,557.0 841.1,555.2 865.4,553.3 889.6,551.5 913.9,550.3 938.1,548.3 962.4,546.3 986.7,545.5 1010.9,542.8 1035.2,541.7 1059.5,540.5 1083.7,540.5 1108.0,540.3 1132.2,539.7 1156.5,538.7 1180.8,538.2" fill="none" stroke="#6ED0E0" stroke-width="1.15" stroke-linejoin="round"/>
</g>
<g filter="url(#nf)"><text x="720.3" y="644.6" font-size="13.2" text-anchor="middle" textLength="50.6" lengthAdjust="spacingAndGlyphs" fill="#ccccdc">09:57:00</text><text x="793.1" y="644.6" font-size="13.2" text-anchor="middle" textLength="50.6" lengthAdjust="spacingAndGlyphs" fill="#ccccdc">09:57:30</text><text x="865.9" y="644.6" font-size="13.2" text-anchor="middle" textLength="50.6" lengthAdjust="spacingAndGlyphs" fill="#ccccdc">09:58:00</text><text x="938.6" y="644.6" font-size="13.2" text-anchor="middle" textLength="50.6" lengthAdjust="spacingAndGlyphs" fill="#ccccdc">09:58:30</text><text x="1011.4" y="644.6" font-size="13.2" text-anchor="middle" textLength="50.6" lengthAdjust="spacingAndGlyphs" fill="#ccccdc">09:59:00</text><text x="1084.2" y="644.6" font-size="13.2" text-anchor="middle" textLength="50.6" lengthAdjust="spacingAndGlyphs" fill="#ccccdc">09:59:30</text><text x="1157.0" y="644.6" font-size="13.2" text-anchor="middle" textLength="50.6" lengthAdjust="spacingAndGlyphs" fill="#ccccdc">10:00:00</text><text x="650.4" y="532.1" font-size="13.2" text-anchor="end" textLength="21.5" lengthAdjust="spacingAndGlyphs" fill="#ccccdc">150</text><text x="650.4" y="564.3" font-size="13.2" text-anchor="end" textLength="21.5" lengthAdjust="spacingAndGlyphs" fill="#ccccdc">100</text><text x="650.4" y="596.6" font-size="13.2" text-anchor="end" textLength="14.8" lengthAdjust="spacingAndGlyphs" fill="#ccccdc">50</text><text x="650.4" y="628.8" font-size="13.2" text-anchor="end" textLength="7.6" lengthAdjust="spacingAndGlyphs" fill="#ccccdc">0</text></g>
<rect x="638.0" y="668.30" width="15.3" height="4.4" rx="1.1" fill="#7EB26D"/>
<text x="668.2" y="672.9" font-size="13.2" textLength="33.4" lengthAdjust="spacingAndGlyphs" fill="#ccccdc">load1</text>
<text x="715.1" y="672.9" font-size="13.2" textLength="59.0" lengthAdjust="spacingAndGlyphs" fill="#ccccdc">Max: 58.6</text>
<text x="780.7" y="672.9" font-size="13.2" textLength="55.4" lengthAdjust="spacingAndGlyphs" fill="#ccccdc">Avg: 47.8</text>
<text x="843.1" y="672.9" font-size="13.2" textLength="75.0" lengthAdjust="spacingAndGlyphs" fill="#ccccdc">Total: 1.05 K</text>
<rect x="929.3" y="668.30" width="15.3" height="4.4" rx="1.1" fill="#EAB839"/>
<text x="959.9" y="672.9" font-size="13.2" textLength="34.0" lengthAdjust="spacingAndGlyphs" fill="#ccccdc">load5</text>
<text x="1006.8" y="672.9" font-size="13.2" textLength="58.6" lengthAdjust="spacingAndGlyphs" fill="#ccccdc">Max: 41.6</text>
<text x="1072.4" y="672.9" font-size="13.2" textLength="55.3" lengthAdjust="spacingAndGlyphs" fill="#ccccdc">Avg: 33.5</text>
<text x="1134.7" y="672.9" font-size="13.2" textLength="59.6" lengthAdjust="spacingAndGlyphs" fill="#ccccdc">Total: 737</text>
<rect x="638.0" y="691.20" width="15.3" height="4.4" rx="1.1" fill="#6ED0E0"/>
<text x="668.2" y="695.9" font-size="13.2" textLength="41.9" lengthAdjust="spacingAndGlyphs" fill="#ccccdc">load15</text>
<text x="722.7" y="695.9" font-size="13.2" textLength="58.6" lengthAdjust="spacingAndGlyphs" fill="#ccccdc">Max: 34.1</text>
<text x="788.3" y="695.9" font-size="13.2" textLength="55.6" lengthAdjust="spacingAndGlyphs" fill="#ccccdc">Avg: 31.0</text>
<text x="850.6" y="695.9" font-size="13.2" textLength="59.3" lengthAdjust="spacingAndGlyphs" fill="#ccccdc">Total: 681</text>
</svg></div>
<div class="panel" style="left:1226px;top:472px;width:602px;height:242px">
<svg width="602" height="242" viewBox="1226 472 602 242">
<text x="1443.1" y="494.9" font-size="15.4" textLength="167.5" lengthAdjust="spacingAndGlyphs" stroke="#ccccdc" stroke-width="0.5" fill="#ccccdc">system.processes_state</text>
<clipPath id="c6"><rect x="1265.8" y="525.3" width="525.9000000000001" height="101.70000000000005"/></clipPath>
<g clip-path="url(#c6)">
<polygon points="1265.8,566.3 1280.5,563.3 1304.8,564.5 1329.0,562.5 1353.2,566.3 1377.5,565.3 1401.7,564.5 1426.0,566.3 1450.2,569.2 1474.4,562.8 1498.7,566.7 1522.9,573.3 1547.2,563.5 1571.4,564.5 1595.6,567.3 1619.9,561.3 1644.1,568.2 1668.3,567.2 1692.6,564.7 1716.8,565.0 1741.1,566.2 1765.3,563.3 1765.3,625.0 1265.8,625.0" fill="#7EB26D" fill-opacity="0.1"/>
</g>
<path d="M1329.0 528.3V625.0M1401.7 528.3V625.0M1474.4 528.3V625.0M1547.2 528.3V625.0M1619.9 528.3V625.0M1692.6 528.3V625.0M1765.3 528.3V625.0" stroke="rgba(201,206,203,0.205)" stroke-width="1.4" fill="none"/><path d="M1265.8 528.3H1791.7M1265.8 552.5H1791.7M1265.8 576.6H1791.7M1265.8 600.8H1791.7M1265.8 625.0H1791.7" stroke="rgba(201,206,203,0.175)" stroke-width="1.4" fill="none"/>
<g clip-path="url(#c6)">
<polyline points="1265.8,566.6 1280.5,563.6 1304.8,564.8 1329.0,562.8 1353.2,566.6 1377.5,565.6 1401.7,564.8 1426.0,566.6 1450.2,569.5 1474.4,563.1 1498.7,567.0 1522.9,573.6 1547.2,563.8 1571.4,564.8 1595.6,567.6 1619.9,561.6 1644.1,568.5 1668.3,567.5 1692.6,565.0 1716.8,565.3 1741.1,566.5 1765.3,563.6" fill="none" stroke="#7EB26D" stroke-width="1.15" stroke-linejoin="round"/>
<polyline points="1265.8,566.3 1280.5,563.3 1304.8,564.5 1329.0,562.5 1353.2,566.3 1377.5,565.3 1401.7,564.5 1426.0,566.3 1450.2,569.2 1474.4,562.8 1498.7,566.7 1522.9,573.3 1547.2,563.5 1571.4,564.5 1595.6,567.3 1619.9,561.3 1644.1,568.2 1668.3,567.2 1692.6,564.7 1716.8,565.0 1741.1,566.2 1765.3,563.3" fill="none" stroke="#EAB839" stroke-width="1.2" stroke-linejoin="round"/>
</g>
<g filter="url(#nf)"><text x="1329.1" y="644.6" font-size="13.2" text-anchor="middle" textLength="50.6" lengthAdjust="spacingAndGlyphs" fill="#ccccdc">09:57:00</text><text x="1401.8" y="644.6" font-size="13.2" text-anchor="middle" textLength="50.6" lengthAdjust="spacingAndGlyphs" fill="#ccccdc">09:57:30</text><text x="1474.5" y="644.6" font-size="13.2" text-anchor="middle" textLength="50.6" lengthAdjust="spacingAndGlyphs" fill="#ccccdc">09:58:00</text><text x="1547.2" y="644.6" font-size="13.2" text-anchor="middle" textLength="50.6" lengthAdjust="spacingAndGlyphs" fill="#ccccdc">09:58:30</text><text x="1620.0" y="644.6" font-size="13.2" text-anchor="middle" textLength="50.6" lengthAdjust="spacingAndGlyphs" fill="#ccccdc">09:59:00</text><text x="1692.7" y="644.6" font-size="13.2" text-anchor="middle" textLength="50.6" lengthAdjust="spacingAndGlyphs" fill="#ccccdc">09:59:30</text><text x="1765.4" y="644.6" font-size="13.2" text-anchor="middle" textLength="50.6" lengthAdjust="spacingAndGlyphs" fill="#ccccdc">10:00:00</text><text x="1259.5" y="532.1" font-size="13.2" text-anchor="end" textLength="21.5" lengthAdjust="spacingAndGlyphs" fill="#ccccdc">100</text><text x="1259.5" y="556.3" font-size="13.2" text-anchor="end" textLength="15.1" lengthAdjust="spacingAndGlyphs" fill="#ccccdc">75</text><text x="1259.5" y="580.4" font-size="13.2" text-anchor="end" textLength="14.8" lengthAdjust="spacingAndGlyphs" fill="#ccccdc">50</text><text x="1259.5" y="604.6" font-size="13.2" text-anchor="end" textLength="15.0" lengthAdjust="spacingAndGlyphs" fill="#ccccdc">25</text><text x="1259.5" y="628.8" font-size="13.2" text-anchor="end" textLength="7.6" lengthAdjust="spacingAndGlyphs" fill="#ccccdc">0</text></g>
<rect x="1246.9" y="668.30" width="15.3" height="4.4" rx="1.1" fill="#7EB26D"/>
<text x="1276.9" y="672.9" font-size="13.2" textLength="46.0" lengthAdjust="spacingAndGlyphs" fill="#ccccdc">running</text>
<text x="1335.9" y="672.9" font-size="13.2" textLength="58.5" lengthAdjust="spacingAndGlyphs" fill="#ccccdc">Max: 65.1</text>
<text x="1401.1" y="672.9" font-size="13.2" textLength="55.9" lengthAdjust="spacingAndGlyphs" fill="#ccccdc">Avg: 61.0</text>
<text x="1463.9" y="672.9" font-size="13.2" textLength="75.5" lengthAdjust="spacingAndGlyphs" fill="#ccccdc">Total: 1.34 K</text>
<rect x="1246.9" y="691.20" width="15.3" height="4.4" rx="1.1" fill="#EAB839"/>
<text x="1276.9" y="695.9" font-size="13.2" textLength="47.8" lengthAdjust="spacingAndGlyphs" fill="#ccccdc">blocked</text>
<text x="1337.7" y="695.9" font-size="13.2" textLength="40.3" lengthAdjust="spacingAndGlyphs" fill="#ccccdc">Max: 0</text>
<text x="1384.5" y="695.9" font-size="13.2" textLength="74.7" lengthAdjust="spacingAndGlyphs" fill="#ccccdc">Avg: -0.0322</text>
<text x="1465.6" y="695.9" font-size="13.2" textLength="75.1" lengthAdjust="spacingAndGlyphs" fill="#ccccdc">Total: -0.708</text>
</svg></div>
<div class="panel" style="left:6px;top:723px;width:602px;height:326px">
<svg width="602" height="326" viewBox="6 723 602 326">
<text x="267.7" y="746.1" font-size="15.4" textLength="78.6" lengthAdjust="spacingAndGlyphs" stroke="#ccccdc" stroke-width="0.5" fill="#ccccdc">mem.numa</text>
<clipPath id="c7"><rect x="57" y="776.7" width="514.7" height="142.5999999999999"/></clipPath>
<g clip-path="url(#c7)">
<polygon points="57.0,902.2 71.3,903.7 95.0,904.7 118.7,902.7 142.4,903.8 166.1,904.3 189.8,902.7 213.5,904.8 237.2,905.0 260.9,904.2 284.6,905.2 308.3,906.0 332.0,904.5 355.7,906.2 379.4,906.0 403.1,904.5 426.8,906.3 450.5,906.5 474.2,905.5 497.9,906.5 521.6,907.0 545.3,899.5 545.3,917.3 57.0,917.3" fill="#7EB26D" fill-opacity="0.1"/>
<polygon points="57.0,874.7 71.3,872.5 95.0,870.5 118.7,868.8 142.4,869.8 166.1,870.2 189.8,867.0 213.5,871.8 237.2,872.0 260.9,871.7 284.6,873.7 308.3,876.7 332.0,874.7 355.7,881.0 379.4,880.0 403.1,874.3 426.8,880.0 450.5,882.7 474.2,878.3 497.9,881.3 521.6,882.5 545.3,871.3 545.3,899.5 521.6,907.0 497.9,906.5 474.2,905.5 450.5,906.5 426.8,906.3 403.1,904.5 379.4,906.0 355.7,906.2 332.0,904.5 308.3,906.0 284.6,905.2 260.9,904.2 237.2,905.0 213.5,904.8 189.8,902.7 166.1,904.3 142.4,903.8 118.7,902.7 95.0,904.7 71.3,903.7 57.0,902.2" fill="#EAB839" fill-opacity="0.1"/>
<polygon points="57.0,857.7 71.3,852.8 95.0,849.3 118.7,847.3 142.4,849.3 166.1,848.7 189.8,845.7 213.5,851.2 237.2,851.3 260.9,851.2 284.6,854.7 308.3,857.8 332.0,855.8 355.7,865.2 379.4,863.3 403.1,855.3 426.8,863.3 450.5,867.7 474.2,860.8 497.9,865.7 521.6,866.7 545.3,854.2 545.3,871.3 521.6,882.5 497.9,881.3 474.2,878.3 450.5,882.7 426.8,880.0 403.1,874.3 379.4,880.0 355.7,881.0 332.0,874.7 308.3,876.7 284.6,873.7 260.9,871.7 237.2,872.0 213.5,871.8 189.8,867.0 166.1,870.2 142.4,869.8 118.7,868.8 95.0,870.5 71.3,872.5 57.0,874.7" fill="#6ED0E0" fill-opacity="0.1"/>
<polygon points="57.0,851.7 71.3,846.7 95.0,843.0 118.7,841.3 142.4,842.5 166.1,842.5 189.8,838.5 213.5,845.3 237.2,845.5 260.9,845.5 284.6,848.7 308.3,852.8 332.0,850.3 355.7,860.5 379.4,858.7 403.1,849.7 426.8,858.8 450.5,863.3 474.2,855.7 497.9,861.2 521.6,862.3 545.3,849.2 545.3,854.2 521.6,866.7 497.9,865.7 474.2,860.8 450.5,867.7 426.8,863.3 403.1,855.3 379.4,863.3 355.7,865.2 332.0,855.8 308.3,857.8 284.6,854.7 260.9,851.2 237.2,851.3 213.5,851.2 189.8,845.7 166.1,848.7 142.4,849.3 118.7,847.3 95.0,849.3 71.3,852.8 57.0,857.7" fill="#EF843C" fill-opacity="0.1"/>
<polygon points="57.0,822.5 71.3,813.3 95.0,808.8 118.7,807.3 142.4,807.3 166.1,807.5 189.8,802.7 213.5,811.8 237.2,812.0 260.9,812.5 284.6,816.3 308.3,823.7 332.0,821.3 355.7,834.2 379.4,832.5 403.1,819.3 426.8,832.2 450.5,838.8 474.2,828.5 497.9,836.2 521.6,837.5 545.3,821.7 545.3,849.2 521.6,862.3 497.9,861.2 474.2,855.7 450.5,863.3 426.8,858.8 403.1,849.7 379.4,858.7 355.7,860.5 332.0,850.3 308.3,852.8 284.6,848.7 260.9,845.5 237.2,845.5 213.5,845.3 189.8,838.5 166.1,842.5 142.4,842.5 118.7,841.3 95.0,843.0 71.3,846.7 57.0,851.7" fill="#E24D42" fill-opacity="0.1"/>
</g>
<path d="M118.7 779.7V917.3M189.8 779.7V917.3M260.9 779.7V917.3M332.0 779.7V917.3M403.1 779.7V917.3M474.2 779.7V917.3M545.3 779.7V917.3" stroke="rgba(201,206,203,0.205)" stroke-width="1.4" fill="none"/><path d="M57.0 779.7H571.7M57.0 807.2H571.7M57.0 834.7H571.7M57.0 862.3H571.7M57.0 889.8H571.7M57.0 917.3H571.7" stroke="rgba(201,206,203,0.175)" stroke-width="1.4" fill="none"/>
<g clip-path="url(#c7)">
<polyline points="57.0,902.2 71.3,903.7 95.0,904.7 118.7,902.7 142.4,903.8 166.1,904.3 189.8,902.7 213.5,904.8 237.2,905.0 260.9,904.2 284.6,905.2 308.3,906.0 332.0,904.5 355.7,906.2 379.4,906.0 403.1,904.5 426.8,906.3 450.5,906.5 474.2,905.5 497.9,906.5 521.6,907.0 545.3,899.5" fill="none" stroke="#7EB26D" stroke-width="1.15" stroke-linejoin="round"/>
<polyline points="57.0,874.7 71.3,872.5 95.0,870.5 118.7,868.8 142.4,869.8 166.1,870.2 189.8,867.0 213.5,871.8 237.2,872.0 260.9,871.7 284.6,873.7 308.3,876.7 332.0,874.7 355.7,881.0 379.4,880.0 403.1,874.3 426.8,880.0 450.5,882.7 474.2,878.3 497.9,881.3 521.6,882.5 545.3,871.3" fill="none" stroke="#EAB839" stroke-width="1.15" stroke-linejoin="round"/>
<polyline points="57.0,857.7 71.3,852.8 95.0,849.3 118.7,847.3 142.4,849.3 166.1,848.7 189.8,845.7 213.5,851.2 237.2,851.3 260.9,851.2 284.6,854.7 308.3,857.8 332.0,855.8 355.7,865.2 379.4,863.3 403.1,855.3 426.8,863.3 450.5,867.7 474.2,860.8 497.9,865.7 521.6,866.7 545.3,854.2" fill="none" stroke="#6ED0E0" stroke-width="1.15" stroke-linejoin="round"/>
<polyline points="57.0,851.7 71.3,846.7 95.0,843.0 118.7,841.3 142.4,842.5 166.1,842.5 189.8,838.5 213.5,845.3 237.2,845.5 260.9,845.5 284.6,848.7 308.3,852.8 332.0,850.3 355.7,860.5 379.4,858.7 403.1,849.7 426.8,858.8 450.5,863.3 474.2,855.7 497.9,861.2 521.6,862.3 545.3,849.2" fill="none" stroke="#EF843C" stroke-width="1.15" stroke-linejoin="round"/>
<polyline points="57.0,822.8 71.3,813.6 95.0,809.1 118.7,807.6 142.4,807.6 166.1,807.8 189.8,803.0 213.5,812.1 237.2,812.3 260.9,812.8 284.6,816.6 308.3,824.0 332.0,821.6 355.7,834.5 379.4,832.8 403.1,819.6 426.8,832.5 450.5,839.1 474.2,828.8 497.9,836.5 521.6,837.8 545.3,822.0" fill="none" stroke="#E24D42" stroke-width="0.9" stroke-linejoin="round"/>
<polyline points="57.0,822.5 71.3,813.3 95.0,808.8 118.7,807.3 142.4,807.3 166.1,807.5 189.8,802.7 213.5,811.8 237.2,812.0 260.9,812.5 284.6,816.3 308.3,823.7 332.0,821.3 355.7,834.2 379.4,832.5 403.1,819.3 426.8,832.2 450.5,838.8 474.2,828.5 497.9,836.2 521.6,837.5 545.3,821.7" fill="none" stroke="#1F78C1" stroke-width="1.2" stroke-linejoin="round"/>
</g>
<g filter="url(#nf)"><text x="118.0" y="937.9" font-size="13.2" text-anchor="middle" textLength="50.6" lengthAdjust="spacingAndGlyphs" fill="#ccccdc">09:57:00</text><text x="189.1" y="937.9" font-size="13.2" text-anchor="middle" textLength="50.6" lengthAdjust="spacingAndGlyphs" fill="#ccccdc">09:57:30</text><text x="260.2" y="937.9" font-size="13.2" text-anchor="middle" textLength="50.6" lengthAdjust="spacingAndGlyphs" fill="#ccccdc">09:58:00</text><text x="331.3" y="937.9" font-size="13.2" text-anchor="middle" textLength="50.6" lengthAdjust="spacingAndGlyphs" fill="#ccccdc">09:58:30</text><text x="402.4" y="937.9" font-size="13.2" text-anchor="middle" textLength="50.6" lengthAdjust="spacingAndGlyphs" fill="#ccccdc">09:59:00</text><text x="473.5" y="937.9" font-size="13.2" text-anchor="middle" textLength="50.6" lengthAdjust="spacingAndGlyphs" fill="#ccccdc">09:59:30</text><text x="544.6" y="937.9" font-size="13.2" text-anchor="middle" textLength="50.6" lengthAdjust="spacingAndGlyphs" fill="#ccccdc">10:00:00</text><text x="50.7" y="783.0" font-size="13.2" text-anchor="end" textLength="33.5" lengthAdjust="spacingAndGlyphs" fill="#ccccdc">500 K</text><text x="50.7" y="810.5" font-size="13.2" text-anchor="end" textLength="33.8" lengthAdjust="spacingAndGlyphs" fill="#ccccdc">400 K</text><text x="50.7" y="838.0" font-size="13.2" text-anchor="end" textLength="33.5" lengthAdjust="spacingAndGlyphs" fill="#ccccdc">300 K</text><text x="50.7" y="865.6" font-size="13.2" text-anchor="end" textLength="33.5" lengthAdjust="spacingAndGlyphs" fill="#ccccdc">200 K</text><text x="50.7" y="893.1" font-size="13.2" text-anchor="end" textLength="33.2" lengthAdjust="spacingAndGlyphs" fill="#ccccdc">100 K</text><text x="50.7" y="920.6" font-size="13.2" text-anchor="end" textLength="7.6" lengthAdjust="spacingAndGlyphs" fill="#ccccdc">0</text></g>
<rect x="26.9" y="960.75" width="15.3" height="4.4" rx="1.1" fill="#7EB26D"/>
<text x="56.9" y="965.9" font-size="13.2" textLength="67.3" lengthAdjust="spacingAndGlyphs" fill="#ccccdc">numa.local</text>
<text x="137.0" y="965.9" font-size="13.2" textLength="70.6" lengthAdjust="spacingAndGlyphs" fill="#ccccdc">Max: 63.7 K</text>
<text x="214.3" y="965.9" font-size="13.2" textLength="67.7" lengthAdjust="spacingAndGlyphs" fill="#ccccdc">Avg: 46.3 K</text>
<text x="288.7" y="965.9" font-size="13.2" textLength="85.4" lengthAdjust="spacingAndGlyphs" fill="#ccccdc">Total: 1.02 Mil</text>
<rect x="26.9" y="983.75" width="15.3" height="4.4" rx="1.1" fill="#EAB839"/>
<text x="56.9" y="987.9" font-size="13.2" textLength="56.8" lengthAdjust="spacingAndGlyphs" fill="#ccccdc">hint_fault</text>
<text x="127.0" y="987.9" font-size="13.2" textLength="67.0" lengthAdjust="spacingAndGlyphs" fill="#ccccdc">Max: 130 K</text>
<text x="200.5" y="987.9" font-size="13.2" textLength="64.2" lengthAdjust="spacingAndGlyphs" fill="#ccccdc">Avg: 108 K</text>
<text x="271.2" y="987.9" font-size="13.2" textLength="85.4" lengthAdjust="spacingAndGlyphs" fill="#ccccdc">Total: 2.37 Mil</text>
<rect x="26.9" y="1006.75" width="15.3" height="4.4" rx="1.1" fill="#6ED0E0"/>
<text x="56.9" y="1010.9" font-size="13.2" textLength="98.6" lengthAdjust="spacingAndGlyphs" fill="#ccccdc">hint_faults_local</text>
<text x="168.3" y="1010.9" font-size="13.2" textLength="71.0" lengthAdjust="spacingAndGlyphs" fill="#ccccdc">Max: 77.4 K</text>
<text x="246.0" y="1010.9" font-size="13.2" textLength="67.7" lengthAdjust="spacingAndGlyphs" fill="#ccccdc">Avg: 67.1 K</text>
<text x="320.4" y="1010.9" font-size="13.2" textLength="85.1" lengthAdjust="spacingAndGlyphs" fill="#ccccdc">Total: 1.48 Mil</text>
<rect x="26.9" y="1029.80" width="15.3" height="4.4" rx="1.1" fill="#EF843C"/>
<text x="56.9" y="1033.9" font-size="13.2" textLength="96.9" lengthAdjust="spacingAndGlyphs" fill="#ccccdc">pages_migrated</text>
<text x="166.8" y="1033.9" font-size="13.2" textLength="71.0" lengthAdjust="spacingAndGlyphs" fill="#ccccdc">Max: 25.4 K</text>
<text x="244.3" y="1033.9" font-size="13.2" textLength="67.5" lengthAdjust="spacingAndGlyphs" fill="#ccccdc">Avg: 20.0 K</text>
<text x="318.4" y="1033.9" font-size="13.2" textLength="71.7" lengthAdjust="spacingAndGlyphs" fill="#ccccdc">Total: 440 K</text>
</svg></div>
<div class="panel" style="left:617px;top:723px;width:601px;height:326px">
<svg width="601" height="326" viewBox="617 723 601 326">
<text x="820.7" y="746.1" font-size="15.4" textLength="193.9" lengthAdjust="spacingAndGlyphs" stroke="#ccccdc" stroke-width="0.5" fill="#ccccdc">Memory Paged from/to disk</text>
<clipPath id="c8"><rect x="692.1" y="776.1" width="490.6" height="185.39999999999998"/></clipPath>
<g clip-path="url(#c8)">
<polygon points="692.1,847.7 705.4,846.9 728.0,846.2 750.6,838.0 773.2,836.1 795.8,841.8 818.5,833.0 841.1,837.4 863.7,837.2 886.3,825.2 909.0,826.0 931.6,826.2 954.2,817.4 976.8,821.4 999.4,833.8 1022.1,820.5 1044.7,825.6 1067.3,819.5 1089.9,814.0 1112.6,819.3 1135.2,817.6 1157.8,827.9 1157.8,959.5 692.1,959.5" fill="#EAB839" fill-opacity="0.1"/>
</g>
<path d="M750.6 779.1V959.5M818.5 779.1V959.5M886.3 779.1V959.5M954.2 779.1V959.5M1022.1 779.1V959.5M1089.9 779.1V959.5M1157.8 779.1V959.5" stroke="rgba(201,206,203,0.205)" stroke-width="1.4" fill="none"/><path d="M692.1 779.1H1182.7M692.1 824.2H1182.7M692.1 869.3H1182.7M692.1 914.4H1182.7M692.1 959.5H1182.7" stroke="rgba(201,206,203,0.175)" stroke-width="1.4" fill="none"/>
<g clip-path="url(#c8)">
<polyline points="692.1,959.5 705.4,959.5 728.0,959.5 750.6,959.5 773.2,959.5 795.8,959.5 818.5,959.5 841.1,959.5 863.7,959.5 886.3,959.5 909.0,959.5 931.6,959.5 954.2,959.5 976.8,959.5 999.4,959.5 1022.1,959.5 1044.7,959.5 1067.3,959.5 1089.9,959.5 1112.6,959.5 1135.2,959.5 1157.8,959.5" fill="none" stroke="#7EB26D" stroke-width="1.4" stroke-linejoin="round"/>
<polyline points="692.1,847.7 705.4,846.9 728.0,846.2 750.6,838.0 773.2,836.1 795.8,841.8 818.5,833.0 841.1,837.4 863.7,837.2 886.3,825.2 909.0,826.0 931.6,826.2 954.2,817.4 976.8,821.4 999.4,833.8 1022.1,820.5 1044.7,825.6 1067.3,819.5 1089.9,814.0 1112.6,819.3 1135.2,817.6 1157.8,827.9" fill="none" stroke="#EAB839" stroke-width="1.2" stroke-linejoin="round"/>
</g>
<g filter="url(#nf)"><text x="751.1" y="980.1" font-size="13.2" text-anchor="middle" textLength="50.6" lengthAdjust="spacingAndGlyphs" fill="#ccccdc">09:57:00</text><text x="819.0" y="980.1" font-size="13.2" text-anchor="middle" textLength="50.6" lengthAdjust="spacingAndGlyphs" fill="#ccccdc">09:57:30</text><text x="886.8" y="980.1" font-size="13.2" text-anchor="middle" textLength="50.6" lengthAdjust="spacingAndGlyphs" fill="#ccccdc">09:58:00</text><text x="954.7" y="980.1" font-size="13.2" text-anchor="middle" textLength="50.6" lengthAdjust="spacingAndGlyphs" fill="#ccccdc">09:58:30</text><text x="1022.6" y="980.1" font-size="13.2" text-anchor="middle" textLength="50.6" lengthAdjust="spacingAndGlyphs" fill="#ccccdc">09:59:00</text><text x="1090.4" y="980.1" font-size="13.2" text-anchor="middle" textLength="50.6" lengthAdjust="spacingAndGlyphs" fill="#ccccdc">09:59:30</text><text x="1158.3" y="980.1" font-size="13.2" text-anchor="middle" textLength="50.6" lengthAdjust="spacingAndGlyphs" fill="#ccccdc">10:00:00</text><text x="685.8" y="782.4" font-size="13.2" text-anchor="end" textLength="57.2" lengthAdjust="spacingAndGlyphs" fill="#ccccdc">200 MB/s</text><text x="685.8" y="827.5" font-size="13.2" text-anchor="end" textLength="56.8" lengthAdjust="spacingAndGlyphs" fill="#ccccdc">150 MB/s</text><text x="685.8" y="872.6" font-size="13.2" text-anchor="end" textLength="56.8" lengthAdjust="spacingAndGlyphs" fill="#ccccdc">100 MB/s</text><text x="685.8" y="917.7" font-size="13.2" text-anchor="end" textLength="50.0" lengthAdjust="spacingAndGlyphs" fill="#ccccdc">50 MB/s</text><text x="685.8" y="962.8" font-size="13.2" text-anchor="end" textLength="38.1" lengthAdjust="spacingAndGlyphs" fill="#ccccdc">0 kB/s</text></g>
<rect x="638.0" y="1002.90" width="15.3" height="4.4" rx="1.1" fill="#7EB26D"/>
<text x="668.2" y="1007.9" font-size="13.2" textLength="11.7" lengthAdjust="spacingAndGlyphs" fill="#ccccdc">In</text>
<text x="693.2" y="1007.9" font-size="13.2" textLength="86.5" lengthAdjust="spacingAndGlyphs" fill="#ccccdc">Min: 20.6 kB/s</text>
<text x="786.6" y="1007.9" font-size="13.2" textLength="90.0" lengthAdjust="spacingAndGlyphs" fill="#ccccdc">Max: 80.7 kB/s</text>
<text x="883.3" y="1007.9" font-size="13.2" textLength="86.8" lengthAdjust="spacingAndGlyphs" fill="#ccccdc">Avg: 77.3 kB/s</text>
<rect x="638.0" y="1025.70" width="15.3" height="4.4" rx="1.1" fill="#EAB839"/>
<text x="668.2" y="1029.9" font-size="13.2" textLength="21.8" lengthAdjust="spacingAndGlyphs" fill="#ccccdc">Out</text>
<text x="702.8" y="1029.9" font-size="13.2" textLength="88.3" lengthAdjust="spacingAndGlyphs" fill="#ccccdc">Min: 123 MB/s</text>
<text x="797.6" y="1029.9" font-size="13.2" textLength="91.5" lengthAdjust="spacingAndGlyphs" fill="#ccccdc">Max: 161 MB/s</text>
<text x="895.6" y="1029.9" font-size="13.2" textLength="88.3" lengthAdjust="spacingAndGlyphs" fill="#ccccdc">Avg: 143 MB/s</text>
</svg></div>
<div class="panel" style="left:1226px;top:723px;width:602px;height:326px">
<svg width="602" height="326" viewBox="1226 723 602 326">
<text x="1461.7" y="746.1" font-size="15.4" textLength="130.6" lengthAdjust="spacingAndGlyphs" stroke="#ccccdc" stroke-width="0.5" fill="#ccccdc">Memory Utilization</text>
<clipPath id="c9"><rect x="1292" y="776.7" width="499.70000000000005" height="143.0"/></clipPath>
<g clip-path="url(#c9)">
<polygon points="1292.0,904.2 1766.7,898.8 1766.7,917.7 1292.0,917.7" fill="#7EB26D" fill-opacity="0.1"/>
<polygon points="1292.0,895.5 1766.7,887.5 1766.7,898.8 1292.0,904.2" fill="#EAB839" fill-opacity="0.1"/>
<polygon points="1292.0,798.8 1766.7,798.8 1766.7,887.5 1292.0,895.5" fill="#EF843C" fill-opacity="0.1"/>
</g>
<path d="M1352.0 779.7V917.7M1421.1 779.7V917.7M1490.2 779.7V917.7M1559.3 779.7V917.7M1628.5 779.7V917.7M1697.6 779.7V917.7M1766.7 779.7V917.7" stroke="rgba(201,206,203,0.205)" stroke-width="1.4" fill="none"/><path d="M1292.0 779.7H1791.7M1292.0 825.7H1791.7M1292.0 871.7H1791.7M1292.0 917.7H1791.7" stroke="rgba(201,206,203,0.175)" stroke-width="1.4" fill="none"/>
<g clip-path="url(#c9)">
<polyline points="1292.0,904.2 1766.7,898.8" fill="none" stroke="#7EB26D" stroke-width="1.3" stroke-linejoin="round"/>
<polyline points="1292.0,896.1 1766.7,888.1" fill="none" stroke="#EAB839" stroke-width="1.0" stroke-linejoin="round"/>
<polyline points="1292.0,895.5 1766.7,887.5" fill="none" stroke="#6ED0E0" stroke-width="1.2" stroke-linejoin="round"/>
<polyline points="1292.0,798.8 1766.7,798.8" fill="none" stroke="#EF843C" stroke-width="1.8" stroke-linejoin="round"/>
</g>
<g filter="url(#nf)"><text x="1352.1" y="938.3" font-size="13.2" text-anchor="middle" textLength="50.6" lengthAdjust="spacingAndGlyphs" fill="#ccccdc">09:57:00</text><text x="1421.2" y="938.3" font-size="13.2" text-anchor="middle" textLength="50.6" lengthAdjust="spacingAndGlyphs" fill="#ccccdc">09:57:30</text><text x="1490.3" y="938.3" font-size="13.2" text-anchor="middle" textLength="50.6" lengthAdjust="spacingAndGlyphs" fill="#ccccdc">09:58:00</text><text x="1559.4" y="938.3" font-size="13.2" text-anchor="middle" textLength="50.6" lengthAdjust="spacingAndGlyphs" fill="#ccccdc">09:58:30</text><text x="1628.6" y="938.3" font-size="13.2" text-anchor="middle" textLength="50.6" lengthAdjust="spacingAndGlyphs" fill="#ccccdc">09:59:00</text><text x="1697.7" y="938.3" font-size="13.2" text-anchor="middle" textLength="50.6" lengthAdjust="spacingAndGlyphs" fill="#ccccdc">09:59:30</text><text x="1766.8" y="938.3" font-size="13.2" text-anchor="middle" textLength="50.6" lengthAdjust="spacingAndGlyphs" fill="#ccccdc">10:00:00</text><text x="1285.7" y="783.0" font-size="13.2" text-anchor="end" textLength="45.5" lengthAdjust="spacingAndGlyphs" fill="#ccccdc">146 GiB</text><text x="1285.7" y="829.0" font-size="13.2" text-anchor="end" textLength="48.8" lengthAdjust="spacingAndGlyphs" fill="#ccccdc">97.7 GiB</text><text x="1285.7" y="875.0" font-size="13.2" text-anchor="end" textLength="49.3" lengthAdjust="spacingAndGlyphs" fill="#ccccdc">48.8 GiB</text><text x="1285.7" y="921.0" font-size="13.2" text-anchor="end" textLength="33.5" lengthAdjust="spacingAndGlyphs" fill="#ccccdc">0 MiB</text></g>
<rect x="1246.9" y="960.75" width="15.3" height="4.4" rx="1.1" fill="#7EB26D"/>
<text x="1277.1" y="965.9" font-size="13.2" textLength="31.0" lengthAdjust="spacingAndGlyphs" fill="#ccccdc">Used</text>
<text x="1321.1" y="965.9" font-size="13.2" textLength="79.9" lengthAdjust="spacingAndGlyphs" fill="#ccccdc">Min: 14.0 GiB</text>
<text x="1407.7" y="965.9" font-size="13.2" textLength="83.2" lengthAdjust="spacingAndGlyphs" fill="#ccccdc">Max: 19.4 GiB</text>
<text x="1497.4" y="965.9" font-size="13.2" textLength="80.3" lengthAdjust="spacingAndGlyphs" fill="#ccccdc">Avg: 16.8 GiB</text>
<rect x="1246.9" y="983.75" width="15.3" height="4.4" rx="1.1" fill="#EAB839"/>
<text x="1277.1" y="987.9" font-size="13.2" textLength="46.0" lengthAdjust="spacingAndGlyphs" fill="#ccccdc">Cached</text>
<text x="1335.9" y="987.9" font-size="13.2" textLength="80.0" lengthAdjust="spacingAndGlyphs" fill="#ccccdc">Min: 8.38 GiB</text>
<text x="1422.3" y="987.9" font-size="13.2" textLength="83.5" lengthAdjust="spacingAndGlyphs" fill="#ccccdc">Max: 12.2 GiB</text>
<text x="1512.4" y="987.9" font-size="13.2" textLength="80.0" lengthAdjust="spacingAndGlyphs" fill="#ccccdc">Avg: 10.3 GiB</text>
<rect x="1246.9" y="1006.75" width="15.3" height="4.4" rx="1.1" fill="#6ED0E0"/>
<text x="1277.1" y="1010.9" font-size="13.2" textLength="44.3" lengthAdjust="spacingAndGlyphs" fill="#ccccdc">Buffers</text>
<text x="1334.4" y="1010.9" font-size="13.2" textLength="78.8" lengthAdjust="spacingAndGlyphs" fill="#ccccdc">Min: 480 MiB</text>
<text x="1419.9" y="1010.9" font-size="13.2" textLength="82.1" lengthAdjust="spacingAndGlyphs" fill="#ccccdc">Max: 480 MiB</text>
<text x="1508.5" y="1010.9" font-size="13.2" textLength="79.1" lengthAdjust="spacingAndGlyphs" fill="#ccccdc">Avg: 480 MiB</text>
<rect x="1246.9" y="1029.80" width="15.3" height="4.4" rx="1.1" fill="#EF843C"/>
<text x="1277.1" y="1033.9" font-size="13.2" textLength="26.6" lengthAdjust="spacingAndGlyphs" fill="#ccccdc">Free</text>
<text x="1316.7" y="1033.9" font-size="13.2" textLength="80.1" lengthAdjust="spacingAndGlyphs" fill="#ccccdc">Min: 93.5 GiB</text>
<text x="1403.3" y="1033.9" font-size="13.2" textLength="79.5" lengthAdjust="spacingAndGlyphs" fill="#ccccdc">Max: 103 GiB</text>
<text x="1489.5" y="1033.9" font-size="13.2" textLength="80.1" lengthAdjust="spacingAndGlyphs" fill="#ccccdc">Avg: 97.9 GiB</text>
</svg></div>
</body></html>
